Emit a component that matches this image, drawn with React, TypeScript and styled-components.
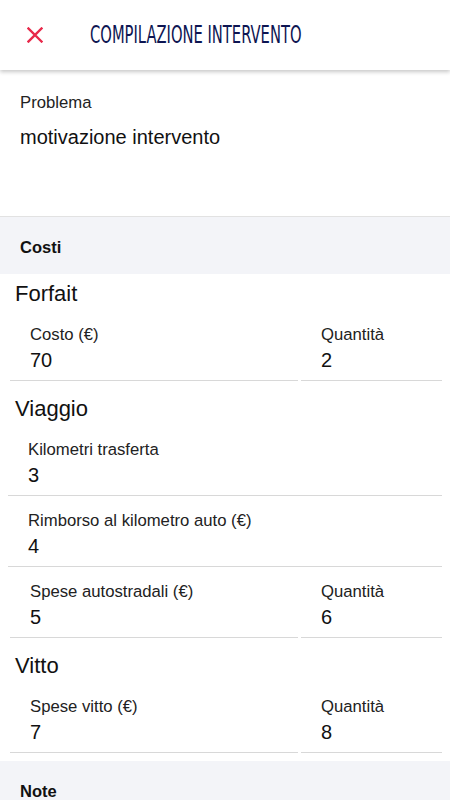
import styled, { createGlobalStyle } from 'styled-components';

const GlobalStyle = createGlobalStyle`
  html, body {
    margin: 0;
    padding: 0;
    background: #fff;
  }
  body {
    font-family: "Liberation Sans", Arial, sans-serif;
    color: #111;
  }
  * {
    box-sizing: border-box;
  }
`;

const Page = styled.div`
  width: 450px;
  height: 800px;
  overflow: hidden;
  background: #fff;
`;

const Header = styled.header`
  position: relative;
  z-index: 2;
  height: 70px;
  display: flex;
  align-items: center;
  padding-left: 27px;
  background: #fff;
  box-shadow: 0 2px 4px rgba(0, 0, 0, 0.22);
`;

const CloseButton = styled.button`
  width: 16px;
  height: 16px;
  padding: 0;
  border: none;
  background: none;
  display: flex;
  cursor: pointer;
`;

const HeaderTitle = styled.h1`
  margin: 0 0 0 47px;
  font-family: "Liberation Sans Narrow", "DejaVu Sans Condensed", "Liberation Sans", sans-serif;
  font-weight: 400;
  font-size: 25px;
  line-height: 30px;
  color: #0d1552;
  white-space: nowrap;
  transform: scaleX(0.655);
  transform-origin: left center;
`;

const ProblemSection = styled.section`
  height: 147px;
  padding: 23px 20px 0;
  border-bottom: 1px solid #e2e2e2;
`;

const ProblemLabel = styled.div`
  font-size: 16.7px;
  line-height: 20px;
  color: #222;
`;

const ProblemText = styled.div`
  margin-top: 12px;
  font-size: 20px;
  line-height: 24px;
  color: #111;
`;

const Band = styled.div`
  height: 57px;
  padding: 20px 20px 0;
  background: #f3f4f8;
  font-size: 16.5px;
  line-height: 20px;
  font-weight: 700;
  color: #111;
`;

const CostBody = styled.div`
  padding-bottom: 8px;
`;

const GroupTitle = styled.h2<{ $first?: boolean }>`
  margin: ${({ $first }) => ($first ? '7px' : '15px')} 0 3px;
  padding-left: 15px;
  font-size: 22px;
  line-height: 26px;
  font-weight: 400;
  color: #111;
`;

const Row = styled.div<{ $split?: boolean }>`
  display: grid;
  grid-template-columns: ${({ $split }) => ($split ? '288px 1fr' : '1fr')};
  gap: 3px;
  padding: 0 8px 0 ${({ $split }) => ($split ? '10px' : '8px')};
`;

const Field = styled.div`
  padding: 15px 0 8px 20px;
  border-bottom: 1px solid #d8d8d8;
`;

const FieldLabel = styled.div`
  font-size: 16.7px;
  line-height: 20px;
  color: #222;
`;

const FieldValue = styled.div`
  margin-top: 3px;
  font-size: 20px;
  line-height: 24px;
  color: #111;
`;

type Item = { label: string; value: string };

const groups: { title: string; rows: Item[][] }[] = [
  {
    title: 'Forfait',
    rows: [[{ label: 'Costo (€)', value: '70' }, { label: 'Quantità', value: '2' }]],
  },
  {
    title: 'Viaggio',
    rows: [
      [{ label: 'Kilometri trasferta', value: '3' }],
      [{ label: 'Rimborso al kilometro auto (€)', value: '4' }],
      [{ label: 'Spese autostradali (€)', value: '5' }, { label: 'Quantità', value: '6' }],
    ],
  },
  {
    title: 'Vitto',
    rows: [[{ label: 'Spese vitto (€)', value: '7' }, { label: 'Quantità', value: '8' }]],
  },
];

function CloseIcon() {
  return (
    <svg width="16" height="16" viewBox="0 0 16 16">
      <path d="M1.5 1.5 L14.5 14.5 M14.5 1.5 L1.5 14.5" stroke="#e8294a" strokeWidth="2.4" strokeLinecap="square" />
    </svg>
  );
}

export default function App() {
  return (
    <Page>
      <GlobalStyle />
      <Header>
        <CloseButton aria-label="Chiudi">
          <CloseIcon />
        </CloseButton>
        <HeaderTitle>COMPILAZIONE INTERVENTO</HeaderTitle>
      </Header>

      <ProblemSection>
        <ProblemLabel>Problema</ProblemLabel>
        <ProblemText>motivazione intervento</ProblemText>
      </ProblemSection>

      <Band>Costi</Band>
      <CostBody>
        {groups.map((group, gi) => (
          <div key={group.title}>
            <GroupTitle $first={gi === 0}>{group.title}</GroupTitle>
            {group.rows.map((row, ri) => (
              <Row key={ri} $split={row.length > 1}>
                {row.map(item => (
                  <Field key={item.label}>
                    <FieldLabel>{item.label}</FieldLabel>
                    <FieldValue>{item.value}</FieldValue>
                  </Field>
                ))}
              </Row>
            ))}
          </div>
        ))}
      </CostBody>

      <Band>Note</Band>
    </Page>
  );
}
